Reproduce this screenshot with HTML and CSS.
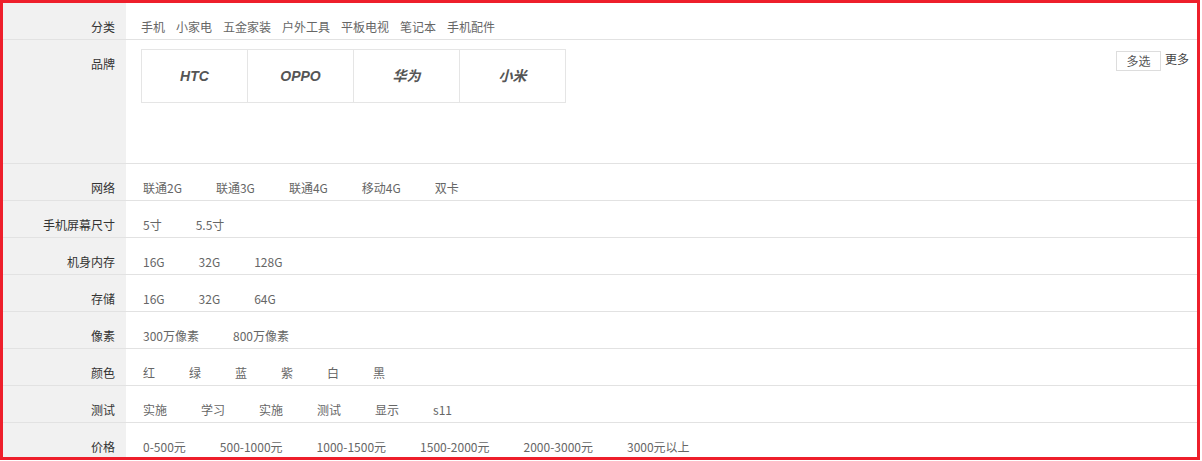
FILE: index.html
```html
<!DOCTYPE html>
<html lang="zh-CN">
<head>
<meta charset="utf-8">
<title>筛选</title>
<link rel="stylesheet" href="styles.css">
</head>
<body>
<div class="selector">
  <div class="row">
    <div class="key">分类</div>
    <div class="value cats">
      <span>手机</span><span>小家电</span><span>五金家装</span><span>户外工具</span><span>平板电视</span><span>笔记本</span><span>手机配件</span>
    </div>
  </div>
  <div class="row brand">
    <div class="key">品牌</div>
    <div class="value brand-value">
      <ul class="logos">
        <li>HTC</li>
        <li>OPPO</li>
        <li>华为</li>
        <li>小米</li>
      </ul>
      <div class="ext">
        <span class="multi">多选</span>
        <span class="more">更多</span>
      </div>
    </div>
  </div>
  <div class="row">
    <div class="key">网络</div>
    <div class="value opts"><span>联通2G</span><span>联通3G</span><span>联通4G</span><span>移动4G</span><span>双卡</span></div>
  </div>
  <div class="row">
    <div class="key">手机屏幕尺寸</div>
    <div class="value opts"><span>5寸</span><span>5.5寸</span></div>
  </div>
  <div class="row">
    <div class="key">机身内存</div>
    <div class="value opts"><span>16G</span><span>32G</span><span>128G</span></div>
  </div>
  <div class="row">
    <div class="key">存储</div>
    <div class="value opts"><span>16G</span><span>32G</span><span>64G</span></div>
  </div>
  <div class="row">
    <div class="key">像素</div>
    <div class="value opts"><span>300万像素</span><span>800万像素</span></div>
  </div>
  <div class="row">
    <div class="key">颜色</div>
    <div class="value opts"><span>红</span><span>绿</span><span>蓝</span><span>紫</span><span>白</span><span>黑</span></div>
  </div>
  <div class="row">
    <div class="key">测试</div>
    <div class="value opts"><span>实施</span><span>学习</span><span>实施</span><span>测试</span><span>显示</span><span>s11</span></div>
  </div>
  <div class="row">
    <div class="key">价格</div>
    <div class="value opts"><span>0-500元</span><span>500-1000元</span><span>1000-1500元</span><span>1500-2000元</span><span>2000-3000元</span><span>3000元以上</span></div>
  </div>
</div>
</body>
</html>
```

FILE: styles.css
```css
html, body {
  margin: 0;
  padding: 0;
  background: #fff;
}

body {
  font-family: "Noto Sans CJK SC", "Microsoft YaHei", sans-serif;
  font-size: 12px;
  color: #666;
}

.selector {
  width: 1200px;
  height: 460px;
  box-sizing: border-box;
  border: 3px solid #ee1f2b;
  overflow: hidden;
}

.row {
  display: flex;
  border-bottom: 1px solid #e2e2e2;
}

.key {
  width: 123px;
  flex: none;
  box-sizing: border-box;
  background: #f1f1f1;
  text-align: right;
  padding: 12px 11px 0 0;
  line-height: 24px;
  color: #333;
}

.value {
  flex: 1;
  padding: 12px 0 0 15px;
  line-height: 24px;
  height: 24px;
  display: flex;
  white-space: nowrap;
}

.cats {
  gap: 11px;
}

.opts {
  padding-left: 17px;
  gap: 34px;
}

.brand .value {
  height: 114px;
  padding-top: 9px;
  padding-right: 8px;
}

.logos {
  list-style: none;
  margin: 0;
  padding: 0;
  display: flex;
  align-self: flex-start;
  border-left: 1px solid #e5e5e5;
  border-top: 1px solid #e5e5e5;
}

.logos li {
  width: 105px;
  height: 52px;
  line-height: 52px;
  border-right: 1px solid #e5e5e5;
  border-bottom: 1px solid #e5e5e5;
  text-align: center;
  font-family: "Liberation Sans", Arial, "Noto Sans CJK SC", sans-serif;
  font-weight: bold;
  font-style: italic;
  font-size: 14px;
  color: #555;
}

.ext {
  margin-left: auto;
  display: flex;
  align-items: flex-start;
  gap: 4px;
  padding-top: 2px;
}

.multi {
  display: block;
  width: 43px;
  height: 18px;
  line-height: 18px;
  border: 1px solid #ddd;
  text-align: center;
  color: #555;
}

.more {
  line-height: 16px;
  color: #444;
}
```
